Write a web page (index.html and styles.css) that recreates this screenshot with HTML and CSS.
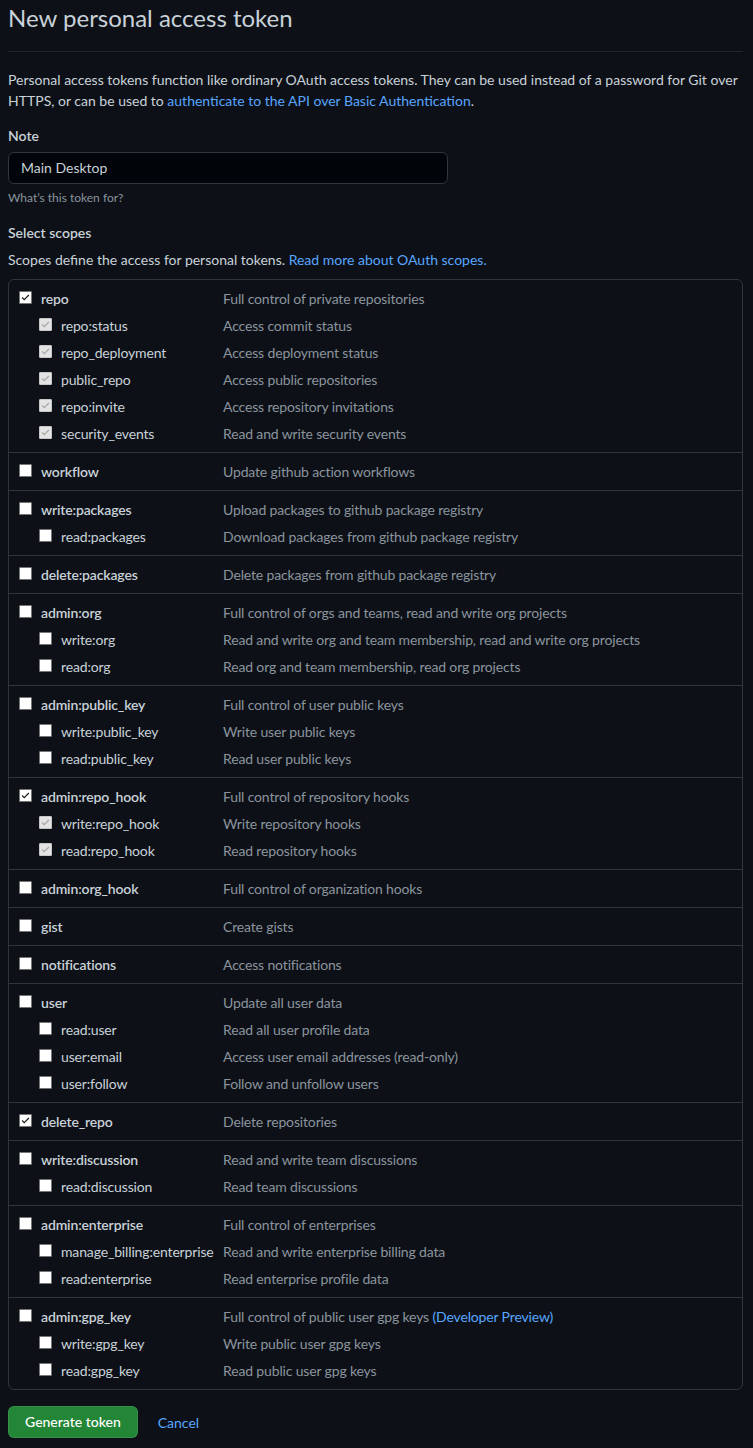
FILE: index.html
```html
<!DOCTYPE html>
<html>
<head>
<meta charset="utf-8">
<title>New personal access token</title>
<link rel="stylesheet" href="styles.css">
</head>
<body>
<div class="page">
  <h1 class="subhead">New personal access token</h1>
  <p class="intro">Personal access tokens function like ordinary OAuth access tokens. They can be used instead of a password for Git over HTTPS, or can be used to <a href="#">authenticate to the API over Basic Authentication</a>.</p>

  <div class="field-label">Note</div>
  <div class="input">Main Desktop</div>
  <div class="note">What’s this token for?</div>

  <div class="field-label scopes-label">Select scopes</div>
  <p class="scopes-desc">Scopes define the access for personal tokens. <a href="#">Read more about OAuth scopes.</a></p>

  <div class="box">
    <div class="group">
      <div class="row top"><span class="cb checked"><svg viewBox="0 0 13 13"><polyline points="2.5,6.5 5,9 10.5,3.5"/></svg></span><span class="name">repo</span><span class="desc">Full control of private repositories</span></div>
      <div class="row sub"><span class="cb disabled"><svg viewBox="0 0 13 13"><polyline points="2.5,6.5 5,9 10.5,3.5"/></svg></span><span class="name">repo:status</span><span class="desc">Access commit status</span></div>
      <div class="row sub"><span class="cb disabled"><svg viewBox="0 0 13 13"><polyline points="2.5,6.5 5,9 10.5,3.5"/></svg></span><span class="name">repo_deployment</span><span class="desc">Access deployment status</span></div>
      <div class="row sub"><span class="cb disabled"><svg viewBox="0 0 13 13"><polyline points="2.5,6.5 5,9 10.5,3.5"/></svg></span><span class="name">public_repo</span><span class="desc">Access public repositories</span></div>
      <div class="row sub"><span class="cb disabled"><svg viewBox="0 0 13 13"><polyline points="2.5,6.5 5,9 10.5,3.5"/></svg></span><span class="name">repo:invite</span><span class="desc">Access repository invitations</span></div>
      <div class="row sub"><span class="cb disabled"><svg viewBox="0 0 13 13"><polyline points="2.5,6.5 5,9 10.5,3.5"/></svg></span><span class="name">security_events</span><span class="desc">Read and write security events</span></div>
    </div>
    <div class="group">
      <div class="row top"><span class="cb"></span><span class="name">workflow</span><span class="desc">Update github action workflows</span></div>
    </div>
    <div class="group">
      <div class="row top"><span class="cb"></span><span class="name">write:packages</span><span class="desc">Upload packages to github package registry</span></div>
      <div class="row sub"><span class="cb"></span><span class="name">read:packages</span><span class="desc">Download packages from github package registry</span></div>
    </div>
    <div class="group">
      <div class="row top"><span class="cb"></span><span class="name">delete:packages</span><span class="desc">Delete packages from github package registry</span></div>
    </div>
    <div class="group">
      <div class="row top"><span class="cb"></span><span class="name">admin:org</span><span class="desc">Full control of orgs and teams, read and write org projects</span></div>
      <div class="row sub"><span class="cb"></span><span class="name">write:org</span><span class="desc">Read and write org and team membership, read and write org projects</span></div>
      <div class="row sub"><span class="cb"></span><span class="name">read:org</span><span class="desc">Read org and team membership, read org projects</span></div>
    </div>
    <div class="group">
      <div class="row top"><span class="cb"></span><span class="name">admin:public_key</span><span class="desc">Full control of user public keys</span></div>
      <div class="row sub"><span class="cb"></span><span class="name">write:public_key</span><span class="desc">Write user public keys</span></div>
      <div class="row sub"><span class="cb"></span><span class="name">read:public_key</span><span class="desc">Read user public keys</span></div>
    </div>
    <div class="group">
      <div class="row top"><span class="cb checked"><svg viewBox="0 0 13 13"><polyline points="2.5,6.5 5,9 10.5,3.5"/></svg></span><span class="name">admin:repo_hook</span><span class="desc">Full control of repository hooks</span></div>
      <div class="row sub"><span class="cb disabled"><svg viewBox="0 0 13 13"><polyline points="2.5,6.5 5,9 10.5,3.5"/></svg></span><span class="name">write:repo_hook</span><span class="desc">Write repository hooks</span></div>
      <div class="row sub"><span class="cb disabled"><svg viewBox="0 0 13 13"><polyline points="2.5,6.5 5,9 10.5,3.5"/></svg></span><span class="name">read:repo_hook</span><span class="desc">Read repository hooks</span></div>
    </div>
    <div class="group">
      <div class="row top"><span class="cb"></span><span class="name">admin:org_hook</span><span class="desc">Full control of organization hooks</span></div>
    </div>
    <div class="group">
      <div class="row top"><span class="cb"></span><span class="name">gist</span><span class="desc">Create gists</span></div>
    </div>
    <div class="group">
      <div class="row top"><span class="cb"></span><span class="name">notifications</span><span class="desc">Access notifications</span></div>
    </div>
    <div class="group">
      <div class="row top"><span class="cb"></span><span class="name">user</span><span class="desc">Update all user data</span></div>
      <div class="row sub"><span class="cb"></span><span class="name">read:user</span><span class="desc">Read all user profile data</span></div>
      <div class="row sub"><span class="cb"></span><span class="name">user:email</span><span class="desc">Access user email addresses (read-only)</span></div>
      <div class="row sub"><span class="cb"></span><span class="name">user:follow</span><span class="desc">Follow and unfollow users</span></div>
    </div>
    <div class="group">
      <div class="row top"><span class="cb checked"><svg viewBox="0 0 13 13"><polyline points="2.5,6.5 5,9 10.5,3.5"/></svg></span><span class="name">delete_repo</span><span class="desc">Delete repositories</span></div>
    </div>
    <div class="group">
      <div class="row top"><span class="cb"></span><span class="name">write:discussion</span><span class="desc">Read and write team discussions</span></div>
      <div class="row sub"><span class="cb"></span><span class="name">read:discussion</span><span class="desc">Read team discussions</span></div>
    </div>
    <div class="group">
      <div class="row top"><span class="cb"></span><span class="name">admin:enterprise</span><span class="desc">Full control of enterprises</span></div>
      <div class="row sub"><span class="cb"></span><span class="name">manage_billing:enterprise</span><span class="desc">Read and write enterprise billing data</span></div>
      <div class="row sub"><span class="cb"></span><span class="name">read:enterprise</span><span class="desc">Read enterprise profile data</span></div>
    </div>
    <div class="group">
      <div class="row top"><span class="cb"></span><span class="name">admin:gpg_key</span><span class="desc">Full control of public user gpg keys <a href="#">(Developer Preview)</a></span></div>
      <div class="row sub"><span class="cb"></span><span class="name">write:gpg_key</span><span class="desc">Write public user gpg keys</span></div>
      <div class="row sub"><span class="cb"></span><span class="name">read:gpg_key</span><span class="desc">Read public user gpg keys</span></div>
    </div>
  </div>

  <div class="actions">
    <button class="btn-primary" type="button">Generate token</button>
    <a class="cancel" href="#">Cancel</a>
  </div>
</div>
</body>
</html>
```
FILE: styles.css
```css
html, body {
  margin: 0;
  background: #0d1117;
}
body {
  font-family: Lato, "Noto Sans", sans-serif;
  font-size: 14px;
  line-height: 21px;
  color: #c9d1d9;
}
a {
  color: #58a6ff;
  text-decoration: none;
}
.page {
  padding: 0 10px 0 8px;
}
.subhead {
  margin: 0;
  font-size: 24px;
  font-weight: 400;
  line-height: 36px;
  padding-bottom: 15px;
  border-bottom: 1px solid #21262d;
  color: #c9d1d9;
}
.intro {
  margin: 17px 0 0;
}
.field-label {
  margin-top: 14px;
  font-weight: 600;
}
.scopes-label {
  margin-top: 15px;
}
.input {
  margin-top: 6px;
  width: 440px;
  height: 32px;
  box-sizing: border-box;
  border: 1px solid #30363d;
  border-radius: 6px;
  background: #010409;
  padding: 0 12px;
  line-height: 30px;
  color: #c9d1d9;
}
.note {
  margin-top: 5px;
  font-size: 12px;
  line-height: 18px;
  color: #8b949e;
}
.scopes-desc {
  margin: 6px 0 0;
}
.box {
  margin-top: 9px;
  border: 1px solid #30363d;
  border-radius: 6px;
}
.group {
  padding: 5px 10px;
}
.group + .group {
  border-top: 1px solid #30363d;
}
.row {
  display: flex;
  align-items: center;
  height: 27px;
  letter-spacing: -0.15px;
}
.row.sub {
  padding-left: 20px;
}
.cb {
  flex: none;
  width: 13px;
  height: 13px;
  box-sizing: border-box;
  background: #ffffff;
  border: 1px solid #767676;
  border-radius: 1px;
  margin: -2px 9px 0 0;
  display: flex;
}
.cb svg {
  width: 11px;
  height: 11px;
  fill: none;
  stroke-width: 1.4;
}
.cb.checked svg {
  stroke: #1a1a1a;
}
.cb.disabled {
  background: #e3e3e3;
  border-color: #c6c6c6;
}
.cb.disabled svg {
  stroke: #a6a6a6;
}
.name {
  flex: none;
  width: 182px;
  white-space: nowrap;
  color: #c9d1d9;
}
.row.top .name {
  font-weight: 600;
}
.row.sub .name {
  width: 162px;
}
.desc {
  color: #8b949e;
  white-space: nowrap;
}
.actions {
  margin-top: 16px;
  display: flex;
  align-items: center;
}
.btn-primary {
  height: 32px;
  padding: 0 16px;
  border: 1px solid rgba(240, 246, 252, 0.1);
  border-radius: 6px;
  background: #238636;
  color: #ffffff;
  font-family: Lato, "Noto Sans", sans-serif;
  font-size: 14px;
  font-weight: 500;
  line-height: 20px;
}
.cancel {
  margin-left: 20px;
}
```
